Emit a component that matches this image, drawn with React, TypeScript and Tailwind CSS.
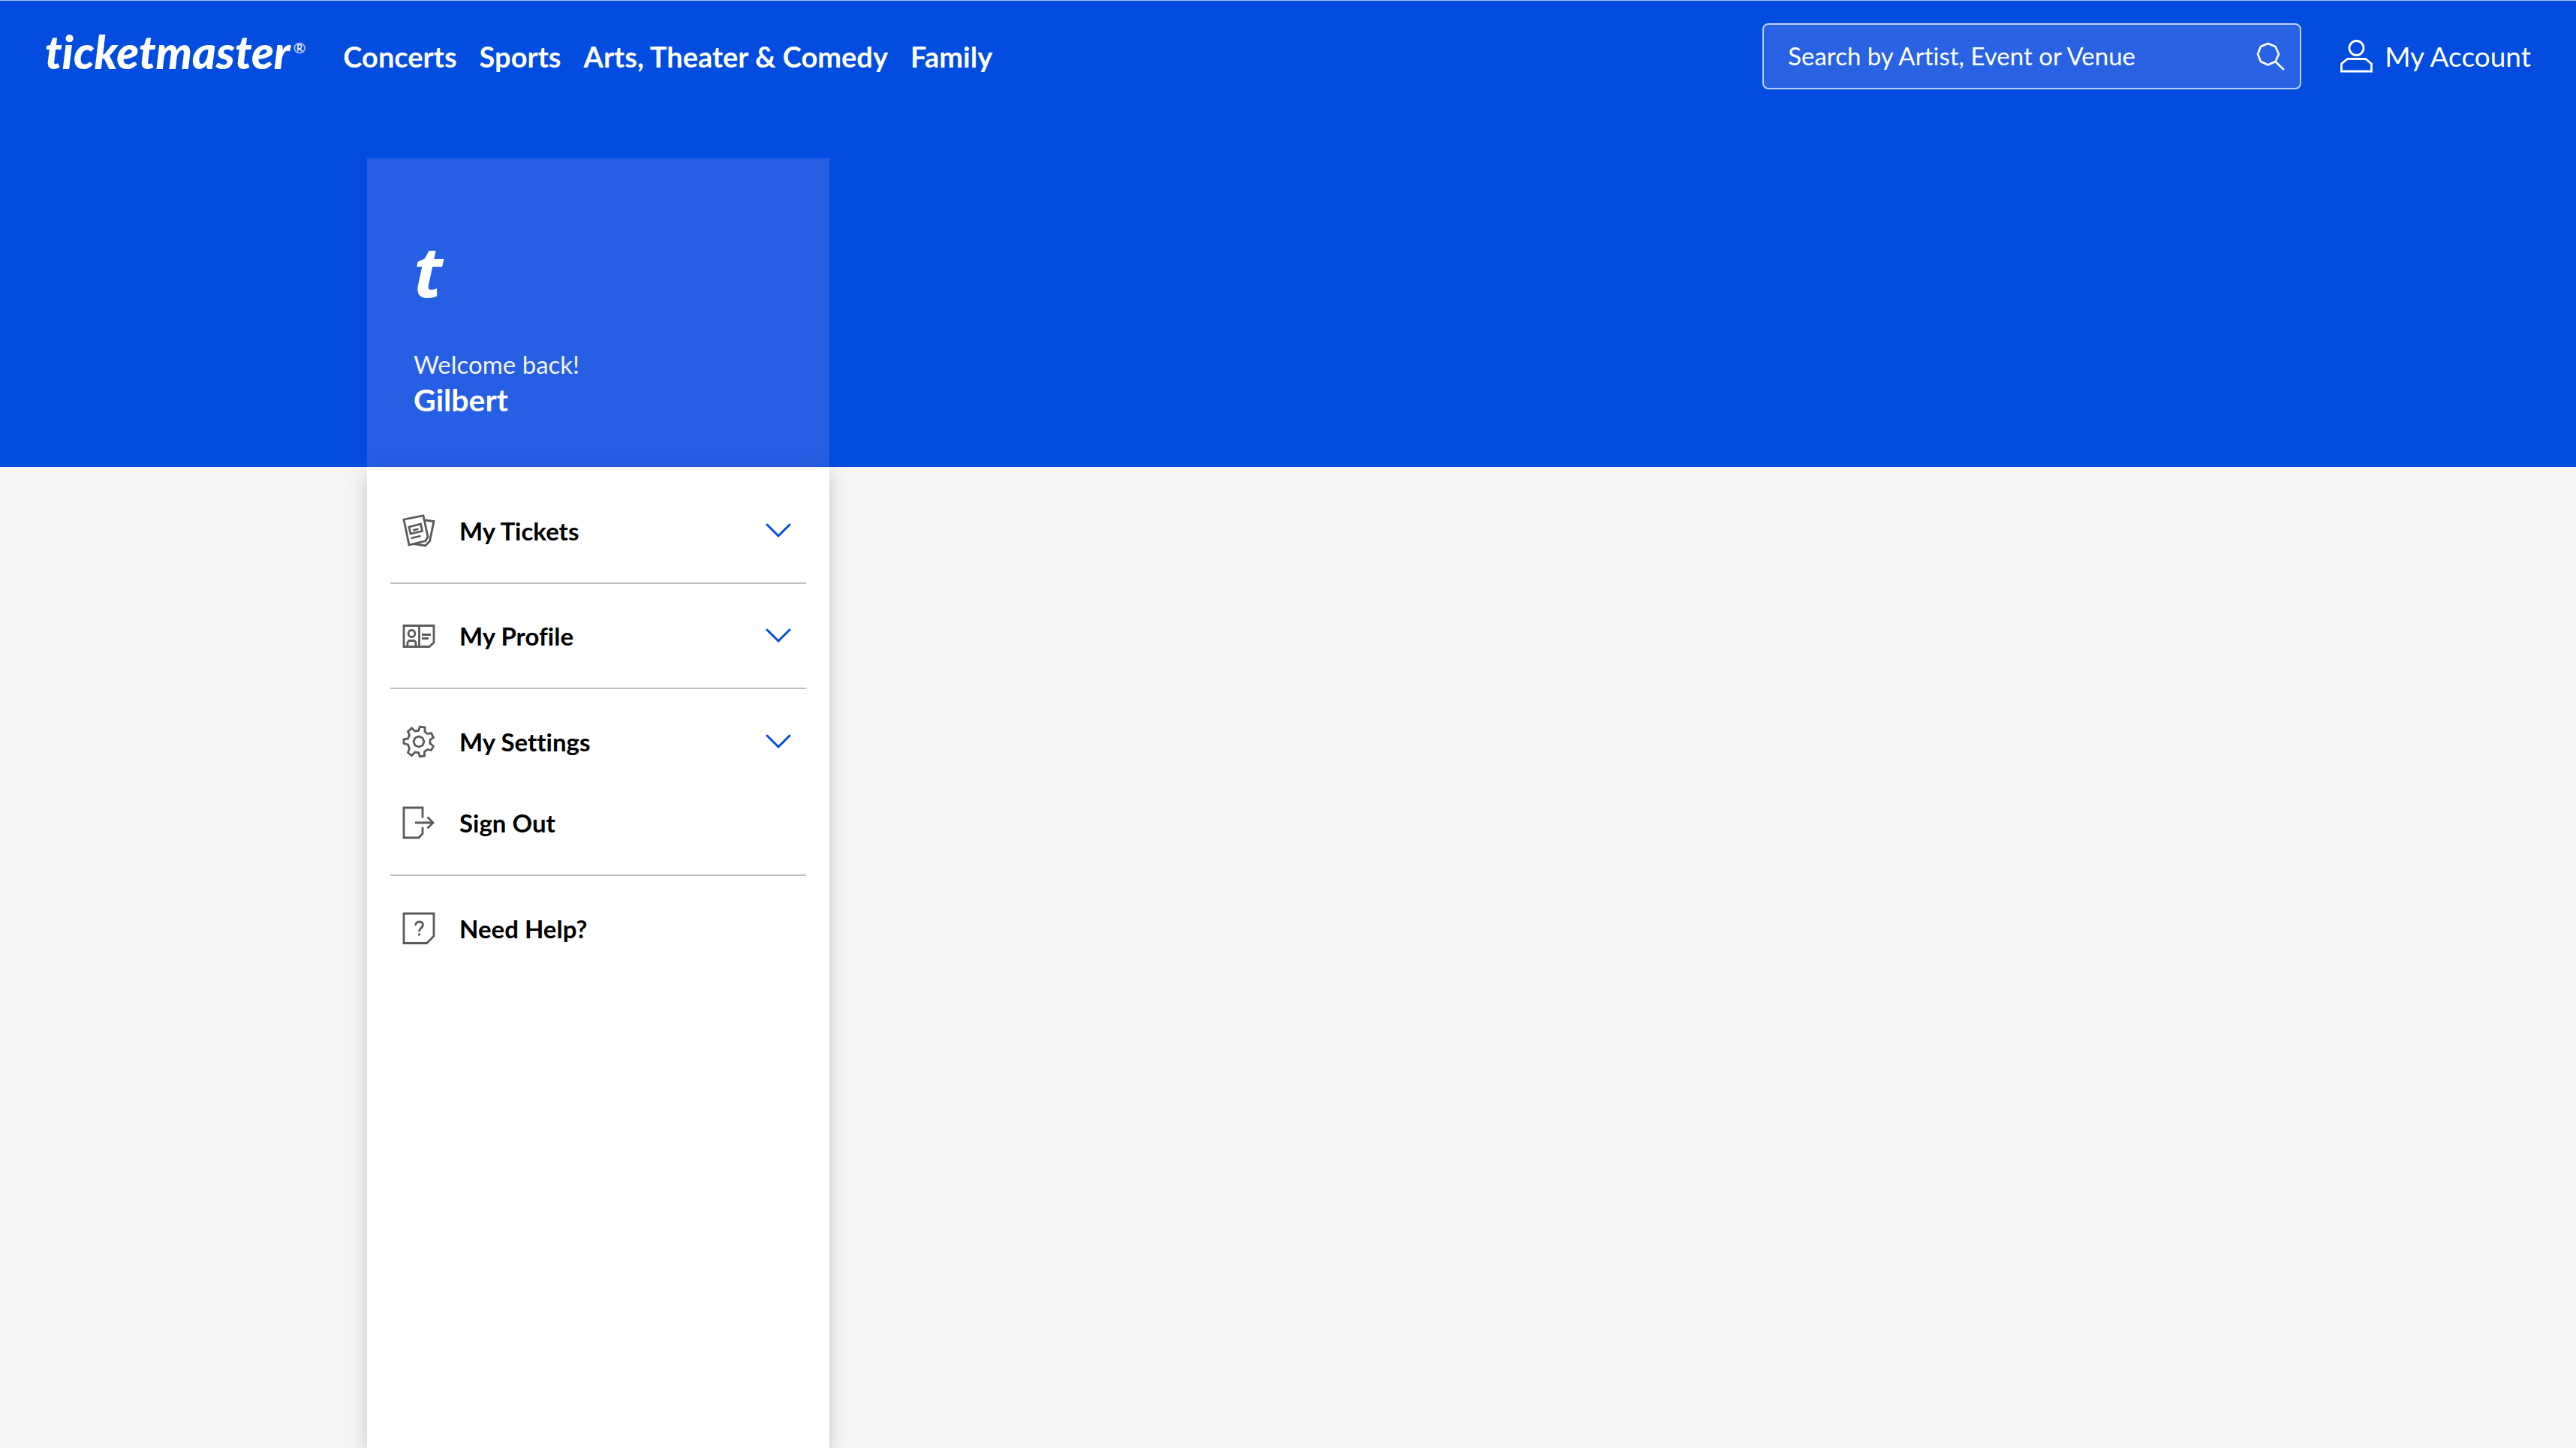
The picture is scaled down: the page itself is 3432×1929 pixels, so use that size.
import type { ReactNode } from "react";

const navLinks = ["Concerts", "Sports", "Arts, Theater & Comedy", "Family"];

function SearchIcon() {
  return (
    <svg className="size-[38px]" viewBox="0 0 38 38" fill="none" stroke="currentColor" strokeWidth="2.6" aria-hidden="true">
      <path d="M15.7 2 L25.5 6 L30 16 L25.5 26 L15.7 30.5 L6 26 L2 16 L6 6 Z" />
      <path d="M25.5 26 L37 37" />
    </svg>
  );
}

function UserIcon() {
  return (
    <svg className="h-11 w-[43px]" viewBox="0 0 43 44" fill="none" stroke="currentColor" strokeWidth="2.8" aria-hidden="true">
      <circle cx="21.5" cy="11" r="9.5" />
      <path d="M1.5 42 V32 L9.5 25.5 H33.5 L41.5 32 V42 Z" />
    </svg>
  );
}

function TicketsIcon() {
  return (
    <svg className="size-11" viewBox="0 0 44 44" fill="none" stroke="currentColor" strokeWidth="2.8" aria-hidden="true">
      <path d="M2 7 L28 2 L34 30 L31 35.5 L9 41 Z" />
      <path d="M30.5 8 L42 9.5 L36.5 36 L30.5 42 L15 39.5" />
      <path d="M9 17 L24.5 13 L26.5 22.5 L11 26 Z" />
      <path d="M14 21.5 L21.5 19.5 M11.5 32 L24.5 29" />
    </svg>
  );
}

function ProfileIcon() {
  return (
    <svg className="size-11" viewBox="0 0 44 44" fill="none" stroke="currentColor" strokeWidth="2.8" aria-hidden="true">
      <path d="M2 8.5 H42 V31 L36 36.5 H2 Z M22.5 8.5 V36.5" />
      <circle cx="12.5" cy="19" r="4.5" />
      <path d="M7 36 V31 L9 28.5 H16 L18 31 V36 M26 20.5 H38 M26 25.5 H35" />
    </svg>
  );
}

function SettingsIcon() {
  return (
    <svg className="size-11" viewBox="0 0 44 44" fill="none" stroke="currentColor" strokeWidth="2.8" aria-hidden="true">
      <path d="M21.5 7.5 L23.5 2 L30 3 L30 8.5 L33.5 11.5 L38.5 10.5 L41.5 16.5 L37 19.5 V24.5 L41.5 28 L38.5 33.5 L33.5 32.5 L29.5 35.5 L29.5 41 L23.5 42 L21.5 36.5 L17 36 L12.5 40.5 L7.5 36.5 L9.5 31 L7.5 26 L2 24.5 V19 L7.5 18 L9.5 13 L7.5 8.5 L12.5 4 L17 8 Z" />
      <path d="M22 15 L27 17 L29 22 L27 27 L22 29 L17 27 L15 22 L17 17 Z" />
    </svg>
  );
}

function SignOutIcon() {
  return (
    <svg className="size-11" viewBox="0 0 44 44" fill="none" stroke="currentColor" strokeWidth="2.8" aria-hidden="true">
      <path d="M27 15.5 V2 H2 V42 H22 L27 36.5 V28" />
      <path d="M17 22 H41.5 M33.5 14.5 L41 22 L33.5 29.5" />
    </svg>
  );
}

function HelpIcon() {
  return (
    <svg className="size-11" viewBox="0 0 44 44" fill="none" stroke="currentColor" strokeWidth="2.8" aria-hidden="true">
      <path d="M2 2 H42 V32 L32.5 41.5 H2 Z" />
      <path d="M17.5 18 C17.5 11.5 27.5 11.5 27.5 17 C27.5 21 22.5 21 22.5 26" />
      <path d="M22.5 28.5 V31.5" />
    </svg>
  );
}

function Chevron() {
  return (
    <svg className="h-5 w-[34px] text-[#024ddf]" viewBox="0 0 34 20" fill="none" stroke="currentColor" strokeWidth="3" strokeLinecap="round" aria-hidden="true">
      <path d="M2 2 L17 17 L32 2" />
    </svg>
  );
}

const rowClass =
  "flex w-full items-center gap-8 pl-4 pr-5 text-left text-[33px] leading-10 font-bold text-black";

function MenuButton({ icon, label }: { icon: ReactNode; label: string }) {
  return (
    <button type="button" aria-expanded="false" className={rowClass}>
      <span className="text-[#5a5a5a]">{icon}</span>
      <span className="flex-1">{label}</span>
      <Chevron />
    </button>
  );
}

function MenuLink({ icon, label }: { icon: ReactNode; label: string }) {
  return (
    <a href="#" className={rowClass}>
      <span className="text-[#5a5a5a]">{icon}</span>
      <span className="flex-1">{label}</span>
    </a>
  );
}

export default function App() {
  return (
    <div className="flex min-h-screen flex-col bg-[#f6f6f6] font-['Lato','Liberation_Sans',sans-serif] [font-variant-ligatures:none]">
      <header className="border-t border-[#a9c4f5] bg-[#024ddf] text-white">
        <div className="flex h-[148px] items-center px-15">
          <a href="#" className="flex items-start pb-3 text-white">
            <span className="text-[61px] leading-[64px] font-black italic">ticketmaster</span>
            <span className="pt-3 pl-1 text-xl">®</span>
          </a>
          <nav className="flex gap-[30px] pl-[50px] text-[38px] leading-12 font-bold">
            {navLinks.map((label) => (
              <a key={label} href="#">{label}</a>
            ))}
          </nav>
          <form className="ml-auto flex h-[88px] w-[718px] items-center rounded-lg border-2 border-[#bfd0f7] bg-[#2a62e4] pr-5 pl-8">
            <input
              type="search"
              aria-label="Search by Artist, Event or Venue"
              placeholder="Search by Artist, Event or Venue"
              className="min-w-0 flex-1 bg-transparent text-[33px] text-white outline-none placeholder:text-white"
            />
            <button type="button" aria-label="Search">
              <SearchIcon />
            </button>
          </form>
          <a href="#" className="flex items-center gap-4 pl-13 text-[37px] leading-12">
            <UserIcon />
            My Account
          </a>
        </div>
      </header>
      <div className="bg-[#024ddf]">
        <div className="pt-[62px] pl-[489px]">
          <div className="flex h-[411px] w-[616px] flex-col bg-[#265ee4] px-[62px] pt-[116px] text-white">
            <span className="font-['Open_Sans',sans-serif] text-[94px] leading-[66px] font-bold italic">t</span>
            <p className="mt-[68px] text-[33px] leading-12 text-[#f3f3f3]">Welcome back!</p>
            <p className="text-[41px] leading-12 font-bold">Gilbert</p>
          </div>
        </div>
      </div>
      <main className="flex flex-1 pl-[489px]">
        <aside className="w-[616px] bg-white px-[31px] shadow-[0_8px_24px_rgba(0,0,0,0.2)]">
          <div className="flex h-[156px] items-center border-b-2 border-[#bfbfbf] pt-4">
            <MenuButton icon={<TicketsIcon />} label="My Tickets" />
          </div>
          <div className="flex h-[140px] items-center border-b-2 border-[#bfbfbf]">
            <MenuButton icon={<ProfileIcon />} label="My Profile" />
          </div>
          <div className="flex h-[249px] flex-col justify-center gap-16 border-b-2 border-[#bfbfbf]">
            <MenuButton icon={<SettingsIcon />} label="My Settings" />
            <MenuLink icon={<SignOutIcon />} label="Sign Out" />
          </div>
          <div className="flex h-[140px] items-center">
            <MenuLink icon={<HelpIcon />} label="Need Help?" />
          </div>
        </aside>
      </main>
    </div>
  );
}
